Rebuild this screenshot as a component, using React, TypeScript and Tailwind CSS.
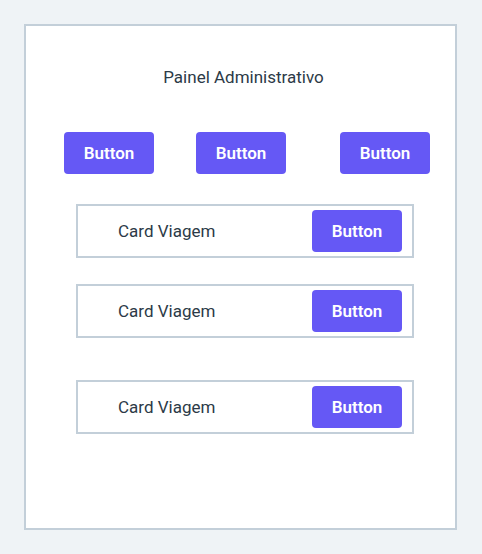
function ActionButton() {
  return (
    <button
      type="button"
      className="h-[42px] w-[90px] shrink-0 rounded bg-[#6558f5] text-center text-[17px] leading-6 font-semibold text-white"
    >
      Button
    </button>
  );
}

function TripCard({ className = "" }: { className?: string }) {
  return (
    <li
      className={`flex items-center justify-between border-2 border-[#c3cfd9] py-1 pr-2.5 pl-10 ${className}`}
    >
      <span>Card Viagem</span>
      <ActionButton />
    </li>
  );
}

export default function App() {
  return (
    <div className="flex min-h-screen bg-[#eff3f6] py-6 pr-[25px] pl-6 font-['Roboto','Liberation_Sans',sans-serif] text-[17px] leading-6 text-[#2c3a47]">
      <main className="flex-1 border-2 border-[#c3cfd9] bg-white pt-[39px] pb-10">
        <h1 className="pl-1.5 text-center">Painel Administrativo</h1>
        <nav aria-label="Ações" className="mt-[43px] flex pr-[25px] pl-[38px]">
          <ActionButton />
          <div className="ml-[42px] flex flex-1 justify-between">
            <ActionButton />
            <ActionButton />
          </div>
        </nav>
        <ul className="mt-[30px] flex flex-col pr-[41px] pl-[50px]">
          <TripCard />
          <TripCard className="mt-[26px]" />
          <TripCard className="mt-[42px]" />
        </ul>
      </main>
    </div>
  );
}
